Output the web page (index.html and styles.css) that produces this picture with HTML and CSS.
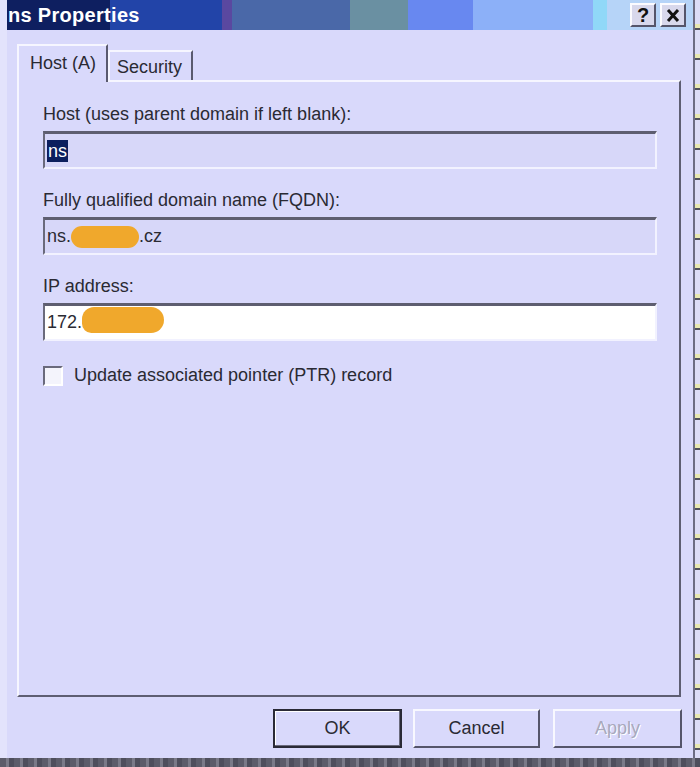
FILE: index.html
```html
<!DOCTYPE html>
<html>
<head>
<meta charset="utf-8">
<link rel="stylesheet" href="styles.css">
</head>
<body>
<div class="desk">
  <div class="row">
    <div class="window">
      <div class="titlebar">
        <span class="title">ns Properties</span>
        <div class="tbtns">
          <span class="tbtn">?</span>
          <span class="tbtn">
            <svg width="14" height="13" viewBox="0 0 14 13"><path d="M2 1 L12 12 M12 1 L2 12" stroke="#111" stroke-width="3"/></svg>
          </span>
        </div>
      </div>
      <div class="tabs">
        <div class="tab active">Host (A)</div>
        <div class="tab">Security</div>
      </div>
      <div class="panel">
        <div class="field">
          <div class="label">Host (uses parent domain if left blank):</div>
          <div class="input ro"><span class="sel">ns</span></div>
        </div>
        <div class="field">
          <div class="label">Fully qualified domain name (FQDN):</div>
          <div class="input ro">ns.<span class="blob b1"></span>.cz</div>
        </div>
        <div class="field">
          <div class="label">IP address:</div>
          <div class="input white">172.<span class="blob b2"></span></div>
        </div>
        <label class="check"><span class="box"></span><span>Update associated pointer (PTR) record</span></label>
      </div>
      <div class="buttons">
        <div class="btn default">OK</div>
        <div class="btn">Cancel</div>
        <div class="btn disabled">Apply</div>
      </div>
    </div>
    <div class="edge"></div>
  </div>
  <div class="strip"></div>
</div>
</body>
</html>
```
FILE: styles.css
```css
html, body { margin: 0; padding: 0; }
body {
  width: 700px; height: 767px; overflow: hidden;
  font-family: "Liberation Sans", Arial, sans-serif;
  font-size: 18px; color: #2a2a33;
  background: #d9d9fb;
}
.desk { display: flex; flex-direction: column; width: 700px; height: 767px; }
.row { display: flex; height: 758px; }
.window {
  width: 686px; height: 758px;
  background: #d9d9fb;
  border-left: 7px solid #e3e3fc;
  border-right: 2px solid #6c6c82;
  box-sizing: content-box;
  display: flex; flex-direction: column;
}
.edge {
  flex: 1;
  background: repeating-linear-gradient(180deg, #dcdcf6 0 24px, #e8e8b0 24px 28px, #50505c 28px 30px);
}
.strip {
  height: 9px;
  background: repeating-linear-gradient(90deg, #5c5c6a 0 6px, #7a7a88 6px 9px, #4e4e5c 9px 14px);
}
.titlebar {
  height: 30px; display: flex; align-items: center; justify-content: space-between;
  padding-right: 7px;
  background: linear-gradient(90deg,
    #0e1f60 0 103px, #2244a8 103px 215px, #5a48a0 215px 225px,
    #4a68a8 225px 343px, #6a90a2 343px 401px, #6888f0 401px 466px,
    #8cb0f8 466px 586px, #90d8f8 586px 600px, #b6d4f8 600px);
}
.title { color: #fff; font-weight: bold; font-size: 20px; padding-left: 1px; letter-spacing: 0.3px; }
.tbtns { display: flex; gap: 4px; }
.tbtn {
  width: 22px; height: 20px; display: flex; align-items: center; justify-content: center;
  background: #d8d8ec; font-weight: bold; font-size: 20px; color: #111;
  border-top: 2px solid #fbfbff; border-left: 2px solid #fbfbff;
  border-right: 2px solid #55556a; border-bottom: 2px solid #55556a;
}
.tabs { display: flex; align-items: flex-end; margin-top: 14px; margin-left: 10px; height: 36px; position: relative; z-index: 1; }
.tab {
  height: 30px; line-height: 30px; padding: 0 9px 0 7px;
  border-top: 2px solid #f6f6ff; border-left: 2px solid #f6f6ff;
  border-right: 2px solid #5a5a6e;
  box-sizing: border-box; background: #d9d9fb;
}
.tab.active { height: 38px; line-height: 34px; padding: 0 10px 0 11px; margin-bottom: -2px; border-right-width: 2px; }
.panel {
  margin-left: 10px; width: 664px; height: 617px; box-sizing: border-box;
  border-top: 2px solid #f6f6ff; border-left: 2px solid #f6f6ff;
  border-right: 2px solid #5e5e72; border-bottom: 2px solid #5e5e72;
  padding: 21px 22px 0 24px;
  display: flex; flex-direction: column;
}
.field { display: flex; flex-direction: column; margin-bottom: 20px; }
.label { line-height: 22px; margin-bottom: 6px; }
.input {
  height: 38px; box-sizing: border-box; display: flex; align-items: center;
  padding-left: 2px; white-space: nowrap;
  border-top: 3px solid #5e5e70; border-left: 2px solid #6a6a7c;
  border-right: 2px solid #f2f2ff; border-bottom: 2px solid #f2f2ff;
}
.ro { background: #d7d7f9; }
.white { background: #ffffff; }
.sel { background: #0c1f5e; color: #fff; padding: 0 1px; line-height: 22px; }
.blob { display: inline-block; background: #f0a82c; }
.b1 { width: 68px; height: 22px; border-radius: 11px; }
.b2 { width: 82px; height: 26px; border-radius: 13px 14px 14px 10px; margin-top: -6px; }
.check { display: flex; align-items: center; gap: 11px; margin-top: 4px; }
.box {
  width: 20px; height: 20px; box-sizing: border-box; background: #f4f4fc;
  border-top: 2px solid #6a6a7c; border-left: 2px solid #6a6a7c;
  border-right: 2px solid #ffffff; border-bottom: 2px solid #ffffff;
}
.buttons { display: flex; justify-content: flex-end; gap: 11px; padding-right: 11px; margin-top: 12px; }
.btn {
  width: 127px; height: 39px; box-sizing: border-box;
  display: flex; align-items: center; justify-content: center;
  border-top: 2px solid #f8f8ff; border-left: 2px solid #f8f8ff;
  border-right: 2px solid #55556a; border-bottom: 2px solid #55556a;
  background: #d9d9fb;
}
.btn.default { width: 129px; border: 2px solid #2a2a36; box-shadow: inset -1px -1px 0 #6a6a7c, inset 1px 1px 0 #fff; }
.btn.disabled { width: 129px; margin-left: 2px; color: #a8a8bc; text-shadow: 1px 1px 0 #fff; }
```
